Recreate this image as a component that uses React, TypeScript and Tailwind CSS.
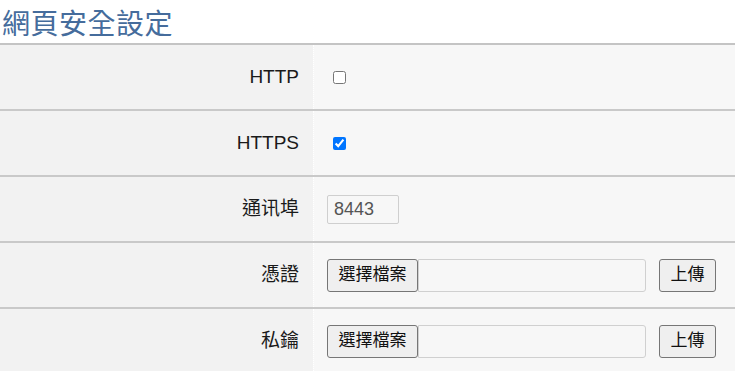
import React from "react";

const font = { fontFamily: '"Liberation Sans", Arial, "Noto Sans CJK TC", sans-serif' };

function Row({ label, children }: { label: string; children: React.ReactNode }) {
  return (
    <div className="flex h-[66px] border-b-2 border-[#c9c9c9]">
      <div className="w-[313px] shrink-0 bg-[#f2f2f2] flex items-center justify-end pr-[14px] text-[19px] text-[#1a1a1a]">
        {label}
      </div>
      <div className="flex-1 bg-[#f7f7f7] border-l border-dotted border-white flex items-center pl-[13px]">
        {children}
      </div>
    </div>
  );
}

function FilePicker() {
  return (
    <div className="flex items-center">
      <div className="flex h-[33px]">
        <button className="h-full w-[91px] bg-[#efefef] border border-[#767676] rounded-[3px] text-[17px] text-[#111]">
          選擇檔案
        </button>
        <div className="w-[228px] h-full border border-[#d0d0d0] rounded-r-[3px] bg-[#f7f7f7]" />
      </div>
      <button className="ml-[13px] h-[33px] w-[57px] bg-[#efefef] border border-[#767676] rounded-[3px] text-[17px] text-[#111]">
        上傳
      </button>
    </div>
  );
}

export default function App() {
  return (
    <div className="w-[735px] h-[371px] overflow-hidden bg-white" style={font}>
      <div className="h-[45px] border-b-2 border-[#c4c4c4] flex items-end pb-[4px] pl-[2px]">
        <h1 className="text-[28px] leading-none text-[#456c9c] tracking-[0.5px]">網頁安全設定</h1>
      </div>
      <Row label="HTTP">
        <input type="checkbox" className="ml-[6px] w-[13px] h-[13px]" />
      </Row>
      <Row label="HTTPS">
        <input type="checkbox" defaultChecked className="ml-[6px] w-[13px] h-[13px]" />
      </Row>
      <Row label="通讯埠">
        <input
          type="text"
          defaultValue="8443"
          className="w-[72px] h-[29px] border border-[#cfcfcf] rounded-[2px] bg-[#f7f7f7] px-[6px] text-[18px] text-[#555] outline-none"
        />
      </Row>
      <Row label="憑證">
        <FilePicker />
      </Row>
      <Row label="私鑰">
        <FilePicker />
      </Row>
    </div>
  );
}
